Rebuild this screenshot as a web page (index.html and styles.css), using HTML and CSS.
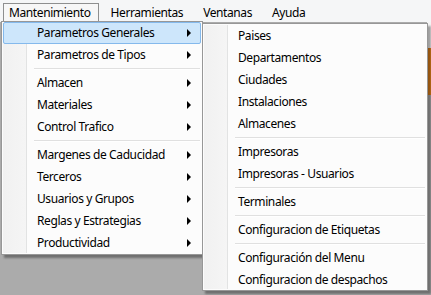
FILE: index.html
```html
<!DOCTYPE html>
<html lang="es">
<head>
    <meta charset="UTF-8">
    <title>Mantenimiento</title>
    <link rel="stylesheet" href="styles.css">
</head>
<body>
    <div class="menubar">
        <div class="bar-item open">Mantenimiento</div>
        <div class="bar-item">Herramientas</div>
        <div class="bar-item">Ventanas</div>
        <div class="bar-item">Ayuda</div>
    </div>

    <div class="workspace">
        <div class="edge">
            <div class="edge-light"></div>
            <div class="edge-orange"></div>
        </div>
    </div>

    <!-- menu principal -->
    <div class="menu main-menu">
        <div class="item sub active">Parametros Generales</div>
        <div class="item sub">Parametros de Tipos</div>
        <div class="sep"></div>
        <div class="item sub">Almacen</div>
        <div class="item sub">Materiales</div>
        <div class="item sub">Control Trafico</div>
        <div class="sep"></div>
        <div class="item sub">Margenes de Caducidad</div>
        <div class="item sub">Terceros</div>
        <div class="item sub">Usuarios y Grupos</div>
        <div class="item sub">Reglas y Estrategias</div>
        <div class="item sub">Productividad</div>
    </div>

    <!-- submenu Parametros Generales -->
    <div class="menu side-menu">
        <div class="item">Paises</div>
        <div class="item">Departamentos</div>
        <div class="item">Ciudades</div>
        <div class="item">Instalaciones</div>
        <div class="item">Almacenes</div>
        <div class="sep"></div>
        <div class="item">Impresoras</div>
        <div class="item">Impresoras - Usuarios</div>
        <div class="sep"></div>
        <div class="item">Terminales</div>
        <div class="sep"></div>
        <div class="item">Configuracion de Etiquetas</div>
        <div class="sep"></div>
        <div class="item">Configuración del Menu</div>
        <div class="item">Configuracion de despachos</div>
    </div>
</body>
</html>
```

FILE: styles.css
```css
body {
    font-family: 'Noto Sans', 'Open Sans', sans-serif;
    font-size: 12px;
    letter-spacing: -0.4px;
    color: #000;
    background-color: #ababab;
    margin: 0;
    padding: 0;
    width: 431px;
    height: 295px;
    overflow: hidden;
    position: relative;
}
.menubar {
    height: 22px;
    background-color: #f5f6f7;
    display: flex;
    align-items: flex-end;
    gap: 6px;
    padding-left: 3px;
    box-sizing: border-box;
}
.bar-item {
    height: 19px;
    line-height: 17px;
    padding: 0 7px 0 5px;
    border: 1px solid transparent;
    border-bottom: none;
    box-sizing: border-box;
}
.bar-item.open {
    background-color: #f7f7f7;
    border-color: #8e8f8f;
}
.workspace {
    height: 273px;
    display: flex;
    justify-content: flex-end;
}
.edge {
    width: 4px;
}
.edge-light {
    height: 26px;
    background-color: #f4f4f4;
}
.edge-orange {
    height: 47px;
    background-color: #e0801a;
}
.menu {
    position: absolute;
    background-color: #fcfcfc;
    border: 1px solid #979797;
    box-shadow: 3px 3px 2px rgba(0, 0, 0, 0.35);
    box-sizing: border-box;
    padding: 0 1px;
}
.menu::before {
    content: '';
    position: absolute;
    top: 1px;
    bottom: 1px;
    left: 1px;
    width: 23px;
    background: linear-gradient(to right, #f1f1f1, #f5f5f5);
    border-right: 1px solid #e2e3e3;
}
.main-menu {
    left: 1px;
    top: 21px;
    width: 202px;
    height: 234px;
}
.side-menu {
    left: 202px;
    top: 23px;
    width: 226px;
    height: 268px;
    padding-top: 1px;
}
.item {
    position: relative;
    height: 22px;
    line-height: 20px;
    padding-left: 33px;
    border: 1px solid transparent;
    border-radius: 2px;
    box-sizing: border-box;
    white-space: nowrap;
}
.item.active {
    background-color: #cde6fb;
    border-color: #84b9ec;
}
.item.sub::after {
    content: '';
    position: absolute;
    right: 9px;
    top: 6px;
    border-left: 4px solid #000;
    border-top: 4px solid transparent;
    border-bottom: 4px solid transparent;
}
.sep {
    position: relative;
    height: 6px;
    margin-left: 31px;
    margin-right: 1px;
}
.sep::after {
    content: '';
    position: absolute;
    left: 0;
    right: 0;
    top: 2px;
    border-top: 1px solid #e0e0e0;
    border-bottom: 1px solid #fff;
}
```
